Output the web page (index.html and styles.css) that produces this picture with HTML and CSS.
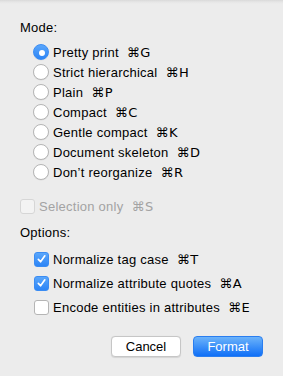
FILE: index.html
```html
<!DOCTYPE html>
<html>
<head>
<meta charset="utf-8">
<link rel="stylesheet" href="styles.css">
</head>
<body>
<div class="sheet">
  <div class="label mode-label">Mode:</div>
  <div class="radios">
    <div class="row"><span class="radio on"></span><span class="txt">Pretty print<span class="key">⌘G</span></span></div>
    <div class="row"><span class="radio"></span><span class="txt">Strict hierarchical<span class="key">⌘H</span></span></div>
    <div class="row"><span class="radio"></span><span class="txt">Plain<span class="key">⌘P</span></span></div>
    <div class="row"><span class="radio"></span><span class="txt">Compact<span class="key">⌘C</span></span></div>
    <div class="row"><span class="radio"></span><span class="txt">Gentle compact<span class="key">⌘K</span></span></div>
    <div class="row"><span class="radio"></span><span class="txt">Document skeleton<span class="key">⌘D</span></span></div>
    <div class="row"><span class="radio"></span><span class="txt">Don’t reorganize<span class="key">⌘R</span></span></div>
  </div>
  <div class="row sel disabled"><span class="check"></span><span class="txt">Selection only<span class="key">⌘S</span></span></div>
  <div class="label opt-label">Options:</div>
  <div class="checks">
    <div class="crow"><span class="check on"><svg viewBox="0 0 14 14" width="14" height="14"><path d="M3.6 7.4 L6 10 L10.6 3.6" fill="none" stroke="#fff" stroke-width="1.8" stroke-linecap="round" stroke-linejoin="round"/></svg></span><span class="txt">Normalize tag case<span class="key">⌘T</span></span></div>
    <div class="crow"><span class="check on"><svg viewBox="0 0 14 14" width="14" height="14"><path d="M3.6 7.4 L6 10 L10.6 3.6" fill="none" stroke="#fff" stroke-width="1.8" stroke-linecap="round" stroke-linejoin="round"/></svg></span><span class="txt">Normalize attribute quotes<span class="key">⌘A</span></span></div>
    <div class="crow"><span class="check"></span><span class="txt">Encode entities in attributes<span class="key">⌘E</span></span></div>
  </div>
  <div class="buttons">
    <button class="btn cancel">Cancel</button>
    <button class="btn primary">Format</button>
  </div>
</div>
</body>
</html>
```
FILE: styles.css
```css
html, body {
  margin: 0;
  padding: 0;
}
body {
  background: linear-gradient(#d9d9d9 0, #e6e6e6 2px, #ececec 4px, #ececec 100%);
  height: 376px;
  font-family: "Liberation Sans", "DejaVu Sans", sans-serif;
  font-size: 13px;
  color: #000;
}
.sheet {
  display: flex;
  flex-direction: column;
  padding: 20px 0 0 20px;
}
.label {
  height: 16px;
  line-height: 16px;
  letter-spacing: 0.25px;
}
.radios {
  margin-top: 6px;
  padding-left: 13px;
  display: flex;
  flex-direction: column;
}
.row {
  height: 20px;
  display: flex;
  align-items: center;
}
.radio {
  width: 14px;
  height: 14px;
  border-radius: 50%;
  border: 1px solid #b5b5b5;
  background: #fff;
  box-sizing: content-box;
  flex: none;
  position: relative;
  box-shadow: 0 0.5px 0.5px rgba(0,0,0,0.08);
}
.radio.on {
  border-color: #3a8cf3;
  background: linear-gradient(#5aa6fb, #2c85f6);
}
.radio.on::after {
  content: "";
  position: absolute;
  left: 5px;
  top: 5px;
  width: 6px;
  height: 6px;
  border-radius: 50%;
  background: #fff;
}
.txt {
  margin-left: 4px;
  white-space: nowrap;
  letter-spacing: 0.25px;
}
.key {
  margin-left: 8px;
  font-family: "DejaVu Sans", sans-serif;
  font-size: 13px;
  letter-spacing: 0.5px;
}
.sel {
  margin-top: 14px;
}
.sel .check {
  width: 13px;
  height: 13px;
  border-color: #d6d6d6;
  background: #f3f3f3;
}
.disabled .txt {
  color: #a3a3a3;
}
.opt-label {
  margin-top: 9px;
}
.checks {
  margin-top: 6px;
  padding-left: 14px;
  display: flex;
  flex-direction: column;
}
.crow {
  height: 24px;
  display: flex;
  align-items: center;
}
.check {
  width: 13px;
  height: 13px;
  border: 1px solid #b5b5b5;
  border-radius: 3px;
  background: #fff;
  flex: none;
  box-sizing: content-box;
  display: flex;
  align-items: center;
  justify-content: center;
}
.check.on {
  border-color: #3a8cf3;
  background: linear-gradient(#5aa6fb, #2c85f6);
}
.check svg {
  display: block;
}
.buttons {
  margin-top: 17px;
  display: flex;
  justify-content: flex-end;
  gap: 12px;
  padding-right: 20px;
}
.btn {
  height: 21px;
  width: 70px;
  border-radius: 4px;
  font-family: "Liberation Sans", sans-serif;
  font-size: 13px;
  padding: 0;
  line-height: 19px;
}
.cancel {
  background: #fff;
  border: 1px solid #c6c6c6;
  color: #000;
  box-shadow: 0 0.5px 1px rgba(0,0,0,0.1);
}
.primary {
  background: linear-gradient(#6cb3fa, #0f6ff7);
  border: 1px solid #2a7ef0;
  color: #fff;
}
```
